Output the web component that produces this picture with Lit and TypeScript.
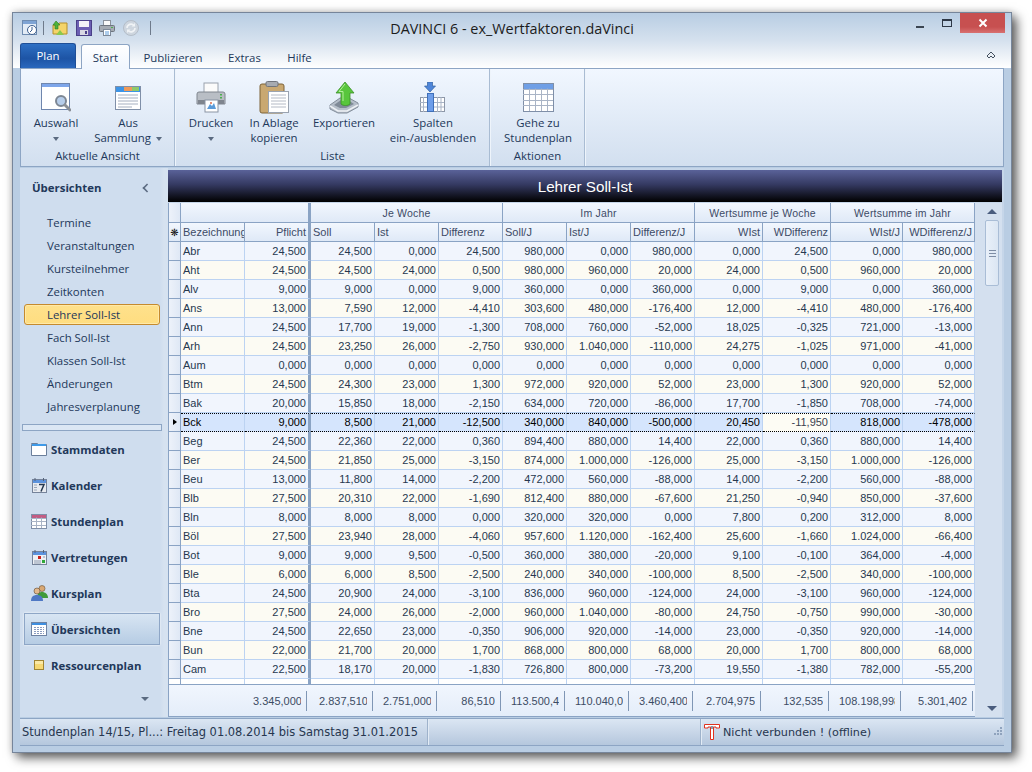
import { LitElement, html, css, svg } from 'lit';
import { customElement } from 'lit/decorators.js';
import { classMap } from 'lit/directives/class-map.js';

const ROWS = `Abr 24,500 24,500 0,000 24,500 980,000 0,000 980,000 0,000 24,500 0,000 980,000
Aht 24,500 24,500 24,000 0,500 980,000 960,000 20,000 24,000 0,500 960,000 20,000
Alv 9,000 9,000 0,000 9,000 360,000 0,000 360,000 0,000 9,000 0,000 360,000
Ans 13,000 7,590 12,000 -4,410 303,600 480,000 -176,400 12,000 -4,410 480,000 -176,400
Ann 24,500 17,700 19,000 -1,300 708,000 760,000 -52,000 18,025 -0,325 721,000 -13,000
Arh 24,500 23,250 26,000 -2,750 930,000 1.040,000 -110,000 24,275 -1,025 971,000 -41,000
Aum 0,000 0,000 0,000 0,000 0,000 0,000 0,000 0,000 0,000 0,000 0,000
Btm 24,500 24,300 23,000 1,300 972,000 920,000 52,000 23,000 1,300 920,000 52,000
Bak 20,000 15,850 18,000 -2,150 634,000 720,000 -86,000 17,700 -1,850 708,000 -74,000
Bck 9,000 8,500 21,000 -12,500 340,000 840,000 -500,000 20,450 -11,950 818,000 -478,000
Beg 24,500 22,360 22,000 0,360 894,400 880,000 14,400 22,000 0,360 880,000 14,400
Ber 24,500 21,850 25,000 -3,150 874,000 1.000,000 -126,000 25,000 -3,150 1.000,000 -126,000
Beu 13,000 11,800 14,000 -2,200 472,000 560,000 -88,000 14,000 -2,200 560,000 -88,000
Blb 27,500 20,310 22,000 -1,690 812,400 880,000 -67,600 21,250 -0,940 850,000 -37,600
Bln 8,000 8,000 8,000 0,000 320,000 320,000 0,000 7,800 0,200 312,000 8,000
Böl 27,500 23,940 28,000 -4,060 957,600 1.120,000 -162,400 25,600 -1,660 1.024,000 -66,400
Bot 9,000 9,000 9,500 -0,500 360,000 380,000 -20,000 9,100 -0,100 364,000 -4,000
Ble 6,000 6,000 8,500 -2,500 240,000 340,000 -100,000 8,500 -2,500 340,000 -100,000
Bta 24,500 20,900 24,000 -3,100 836,000 960,000 -124,000 24,000 -3,100 960,000 -124,000
Bro 27,500 24,000 26,000 -2,000 960,000 1.040,000 -80,000 24,750 -0,750 990,000 -30,000
Bne 24,500 22,650 23,000 -0,350 906,000 920,000 -14,000 23,000 -0,350 920,000 -14,000
Bun 22,000 21,700 20,000 1,700 868,000 800,000 68,000 20,000 1,700 800,000 68,000
Cam 22,500 18,170 20,000 -1,830 726,800 800,000 -73,200 19,550 -1,380 782,000 -55,200`
  .split('\n')
  .map((line) => line.split(' '));

const TOTALS = ['3.345,000', '2.837,510', '2.751,000', '86,510', '113.500,400', '110.040,000', '3.460,400', '2.704,975', '132,535', '108.198,998', '5.301,402'];

const COLUMNS: [string, boolean][] = [
  ['Bezeichnung', false], ['Pflicht', true], ['Soll', false], ['Ist', false], ['Differenz', false],
  ['Soll/J', false], ['Ist/J', false], ['Differenz/J', false],
  ['WIst', true], ['WDifferenz', true], ['WIst/J', true], ['WDifferenz/J', true],
];

const GROUPS: [string, number][] = [['Je Woche', 3], ['Im Jahr', 3], ['Wertsumme je Woche', 2], ['Wertsumme im Jahr', 2]];

const LINKS = ['Termine', 'Veranstaltungen', 'Kursteilnehmer', 'Zeitkonten', 'Lehrer Soll-Ist', 'Fach Soll-Ist', 'Klassen Soll-Ist', 'Änderungen', 'Jahresverplanung'];

const table = (x: number, y: number, w: number, h: number, cols: number, rows: number, head: string) => {
  const cw = w / cols;
  const rh = h / rows;
  return svg`<rect x=${x + 0.5} y=${y + 0.5} width=${w} height=${h} fill="#fff" stroke="#7f8fa8"/>
    <rect x=${x + 1} y=${y + 1} width=${w - 1} height=${rh} fill=${head}/>
    ${Array.from({ length: cols - 1 }, (_, i) => svg`<path d="M${x + 0.5 + Math.round(cw * (i + 1))} ${y + rh}V${y + h}" stroke="#a9b4c6"/>`)}
    ${Array.from({ length: rows - 1 }, (_, i) => svg`<path d="M${x} ${y + 0.5 + Math.round(rh * (i + 1))}H${x + w}" stroke="#a9b4c6"/>`)}`;
};

const ICONS: Record<string, unknown> = {
  auswahl: html`<svg width="30" height="30" viewBox="0 0 30 30">
    <rect x="0.5" y="0.5" width="28" height="26" fill="#fff" stroke="#6f86ad"/>
    <rect x="1" y="1" width="27" height="3" fill="#7ea6ea"/>
    <circle cx="20" cy="18" r="5" fill="#b6cdea" stroke="#7d8794" stroke-width="2"/>
    <path d="M24 22l5 5" stroke="#8a8f96" stroke-width="3" stroke-linecap="round"/>
  </svg>`,
  sammlung: html`<svg width="28" height="26" viewBox="0 0 28 26">
    <rect x="1.5" y="1.5" width="25" height="23" fill="#fff" stroke="#7f8fa8"/>
    <rect x="2" y="2" width="24" height="5" fill="#3d94e6"/>
    <rect x="10" y="2" width="8" height="4" fill="#ef9a5a"/><rect x="18" y="2" width="7" height="4" fill="#8fca6a"/>
    <path d="M4 10h20M4 13h20M4 16h20M4 19h20M4 22h14" stroke="#a5afc0"/>
  </svg>`,
  drucken: html`<svg width="30" height="32" viewBox="0 0 30 32">
    <rect x="8" y="1" width="14" height="11" fill="#fbfbfb" stroke="#9aa2ad"/>
    <path d="M3 10h24a2 2 0 0 1 2 2v10H1V12a2 2 0 0 1 2-2z" fill="#b9bec5" stroke="#80868f"/>
    <rect x="2" y="18" width="26" height="4" fill="#7f858e"/>
    <rect x="24" y="12" width="2" height="1.5" fill="#4caf50"/><rect x="24" y="15" width="2" height="1.5" fill="#4caf50"/>
    <rect x="9" y="18" width="13" height="12" fill="#fff" stroke="#8a94a3"/>
    <path d="M11 27l3-5 2 2 2-3 2 6z" fill="#5c9bd8"/><circle cx="15" cy="21" r="1" fill="#d86a4a"/>
  </svg>`,
  ablage: html`<svg width="30" height="33" viewBox="0 0 30 33">
    <rect x="1" y="3" width="24" height="29" rx="2" fill="#c9a871" stroke="#7c6238"/>
    <rect x="7" y="0.5" width="12" height="5" rx="1.5" fill="#a7abb1" stroke="#71757c"/>
    <rect x="9.5" y="10.5" width="20" height="21" fill="#fff" stroke="#9aa3b0"/>
    <path d="M12 14h15M12 17h15M12 20h15M12 23h15M12 26h15" stroke="#b4bac5"/>
  </svg>`,
  export: html`<svg width="30" height="33" viewBox="0 0 30 33">
    <path d="M1 24l10-7h9l9 5v4l-11 6H9l-8-4z" fill="#b5bec9" stroke="#838d9a"/>
    <path d="M5 24l7-5h7l6 4-8 4h-6z" fill="#7f8a97"/>
    <path d="M1 25l8 5h9l11-6" fill="none" stroke="#eef1f5" stroke-width="1.500"/>
    <path d="M16 1L25 12h-4v11c-2 2-7 2-9 0V12H7z" fill="#58c63c" stroke="#3c8f2a" stroke-width="0.800"/>
    <path d="M16 3l-6 7.500h4V20" fill="none" stroke="#b3ef9c"/>
  </svg>`,
  spalten: html`<svg width="26" height="32" viewBox="0 0 26 32">
    <path d="M7.500 0h5v4h3l-5.500 6-5.500-6h3z" fill="#4f86d9" stroke="#33619f" stroke-width="0.700"/>
    <rect x="0.500" y="15.500" width="24" height="14" fill="#fff" stroke="#8d97a8"/>
    <path d="M0 20.500h24M0 25h24M17.500 15v15M21 15v15M3.500 15v15" stroke="#a9b4c6"/>
    <rect x="7.500" y="11.500" width="6" height="18" fill="#6e9eea" stroke="#3f6fb8"/>
  </svg>`,
  plan: html`<svg width="31" height="29" viewBox="0 0 31 29">
    ${table(0, 0, 30, 28, 5, 5, '#6f9fe6')}
  </svg>`,
  qaClock: html`<svg width="16" height="17" viewBox="0 0 16 17">
    <rect x="0.5" y="1.5" width="14" height="14" fill="#e3ecf6" stroke="#6f8cb0"/>
    <rect x="1" y="2" width="13" height="3" fill="#7fa4d4"/>
    <circle cx="10" cy="11" r="4.5" fill="#fff" stroke="#3d5f8f"/>
    <path d="M10 8v3l-2 2" fill="none" stroke="#3d5f8f"/>
  </svg>`,
  qaFolder: html`<svg width="16" height="16" viewBox="0 0 16 16">
    <path d="M1 5h5l1-2h8v11H1z" fill="#f4d46a" stroke="#b48f2d"/>
    <path d="M4 1l4 4H6v4H3V5H1z" fill="#4fb13b" stroke="#2e7d23" stroke-width="0.6"/>
    <path d="M4 15l4-5 4 5z" fill="#8bc94f"/>
  </svg>`,
  qaSave: html`<svg width="16" height="16" viewBox="0 0 16 16">
    <rect x="0.5" y="0.5" width="15" height="15" fill="#6c5fb3" stroke="#4a4088"/>
    <rect x="3" y="1" width="10" height="6" fill="#f2f2f7"/>
    <rect x="4" y="10" width="8" height="5" fill="#d8d8e4"/>
    <rect x="9" y="11" width="2" height="3" fill="#4a4088"/>
  </svg>`,
  qaPrint: html`<svg width="16" height="16" viewBox="0 0 16 16">
    <rect x="4.500" y="0.500" width="7" height="6" fill="#fafafa" stroke="#8b929c"/>
    <rect x="0.500" y="5.500" width="15" height="6" rx="1" fill="#a5abb3" stroke="#6f7680"/>
    <rect x="4.500" y="9.500" width="7" height="6" fill="#fff" stroke="#7f8a99"/>
    <path d="M6 12h4M6 14h4" stroke="#5c9bd8"/>
    <rect x="12" y="7" width="2" height="1" fill="#4caf50"/>
  </svg>`,
  qaRefresh: html`<svg width="16" height="16" viewBox="0 0 16 16">
    <circle cx="8" cy="8" r="7.5" fill="#ced6df" stroke="#b4bdc8"/>
    <path d="M4 8a4 4 0 0 1 7-2.5M12 8a4 4 0 0 1-7 2.5" fill="none" stroke="#f0f3f6" stroke-width="1.6"/>
    <path d="M12 3v3.5H8.5zM4 13V9.500h3.500z" fill="#f0f3f6"/>
  </svg>`,
  stammdaten: html`<svg width="16" height="14" viewBox="0 0 16 14">
    <path d="M0.5 2.5V1.500h6l1 1H15.500v11H0.500z" fill="#fff" stroke="#6b7f9b"/>
    <rect x="1" y="2" width="14" height="2" fill="#3f9ae8"/>
  </svg>`,
  kalender: html`<svg width="15" height="15" viewBox="0 0 15 15">
    <rect x="0.500" y="1.500" width="14" height="13" fill="#e8ebf0" stroke="#76839a"/>
    <rect x="1" y="2" width="13" height="3" fill="#5d93dd"/>
    <path d="M3 0v3M11.500 0v3" stroke="#54637a"/>
    <path d="M2 7h3M2 9.500h3M2 12h3" stroke="#9aa6b8"/>
    <path d="M7 6.500h5l-3 7" fill="none" stroke="#24374f" stroke-width="1.500"/>
  </svg>`,
  stundenplan: html`<svg width="16" height="15" viewBox="0 0 16 15">${table(0, 0, 15, 14, 3, 4, '#c25c83')}</svg>`,
  vertretungen: html`<svg width="15" height="15" viewBox="0 0 15 15">
    <rect x="0.500" y="1.500" width="14" height="13" fill="#eef0f4" stroke="#76839a"/>
    <rect x="1" y="2" width="13" height="3" fill="#5d93dd"/>
    <path d="M3 0v3M11.500 0v3" stroke="#54637a"/>
    <rect x="6" y="6" width="3" height="3" fill="#c8201c"/><rect x="10" y="10" width="3" height="3" fill="#2fa83a"/>
    <path d="M2 11h7M2 13h7M11 7h2" stroke="#8e9bb0"/>
  </svg>`,
  kursplan: html`<svg width="17" height="16" viewBox="0 0 17 16">
    <circle cx="11" cy="3.500" r="3" fill="#d9a874" stroke="#6a5236" stroke-width="0.600"/>
    <path d="M6 13c0-4 2-6 5-6s6 2 6 6z" fill="#3f9a3a"/>
    <circle cx="6" cy="6" r="3" fill="#e4b88a" stroke="#5c4630" stroke-width="0.600"/>
    <path d="M0 16c0-4 2-6 6-6s6 2 6 6z" fill="#4f78c4"/>
  </svg>`,
  uebersichten: html`<svg width="16" height="14" viewBox="0 0 16 14">
    <rect x="0.500" y="0.500" width="15" height="13" fill="#fff" stroke="#6f83a3"/>
    <rect x="1" y="1" width="14" height="2" fill="#3f8fe0"/>
    <path d="M3 5.500h10M3 7.500h10M3 9.500h10M3 11.500h10" stroke="#8a9cc0" stroke-dasharray="2 1"/>
  </svg>`,
  ressourcen: html`<svg width="14" height="14" viewBox="0 0 14 14">
    <rect x="2.500" y="2.500" width="9" height="9" fill="#f6d873" stroke="#a08432"/>
    <rect x="3" y="3" width="8" height="3" fill="#fbe9a5"/>
  </svg>`,
  logo: html`<svg width="16" height="16" viewBox="0 0 16 16">
    <path d="M0.500 0.500H15.500V4H12V3H9.500V15.500H6.500V3H4V4H0.500z" fill="#fff" stroke="#e0301e"/>
    <path d="M6.500 2H9.500L8.800 5H7.200z" fill="#8d97a5"/>
  </svg>`,
};

@customElement('app-root')
export class AppRoot extends LitElement {
  static styles = css`
    :host {
      display: block;
      width: 1032px;
      height: 772px;
      overflow: hidden;
      background: #fff;
      color: #22385a;
      font-family: 'Open Sans', 'Liberation Sans', sans-serif;
      font-size: 11.4px;
    }
    svg { display: block; flex: none; }
    .window {
      box-sizing: border-box;
      width: 1000px;
      height: 741px;
      margin: 12px 0 0 12px;
      display: flex;
      flex-direction: column;
      border: 1px solid #76859a;
      background: #b9cde3;
      box-shadow: 5px 5px 10px rgba(0, 0, 0, 0.6), 0 0 8px rgba(0, 0, 0, 0.2);
    }

    /* title bar and tabs */
    .head { height: 55px; flex: none; background: linear-gradient(#b8cde3, #d5e1ee 50%, #fff); }
    .title-row { height: 29px; display: grid; grid-template-columns: 1fr auto 1fr; }
    .qa { display: flex; align-items: center; padding-left: 9px; }
    .qa .sep { width: 1px; height: 14px; background: #6e7a8b; }
    .m5 { margin-left: 5px; }
    .m7 { margin-left: 7px; }
    .m8 { margin-left: 8px; }
    .m11 { margin-left: 11px; }
    .title { font-size: 14.4px; color: #1c1c1c; padding-top: 6px; line-height: 19px; }
    .controls { display: flex; justify-content: flex-end; padding-right: 6px; }
    .ctl { height: 20px; display: flex; align-items: center; justify-content: center; }
    .ctl.min { width: 28px; padding-top: 4px; box-sizing: border-box; }
    .ctl.max { width: 26px; }
    .min i { display: block; width: 8px; height: 2px; background: #3b4552; margin-top: 3px; }
    .max i { display: block; box-sizing: border-box; width: 10px; height: 8px; border: 1px solid #2e3846; border-top-width: 2px; }
    .close {
      width: 45px;
      color: #fff;
      background: linear-gradient(#c75050, #c75050 70%, #d87070);
    }
    .tab-row { height: 26px; display: flex; align-items: flex-end; padding: 0 7px; }
    .tab { height: 25px; display: flex; align-items: center; justify-content: center; box-sizing: border-box; padding-top: 3px; flex: none; }
    .tab.plan {
      width: 56px;
      margin-right: 5px;
      color: #fff;
      padding: 0 0 2px;
      border: 1px solid #1f4f97;
      border-bottom: 0;
      border-radius: 3px 3px 0 0;
      background: linear-gradient(#2e70c4, #1d54a5 60%, #2a68bd);
    }
    .tab.start {
      width: 49px;
      height: 25px;
      margin-bottom: -1px;
      padding-top: 1px;
      position: relative;
      background: linear-gradient(#fff, #f0f6fe);
      border: 1px solid #8da5c4;
      border-bottom: 0;
      border-radius: 3px 3px 0 0;
    }
    .tab.t1 { width: 86px; }
    .tab.t2 { width: 57px; }
    .tab.t3 { width: 53px; }
    .collapse { margin-left: auto; padding: 0 8px 9px 0; }

    /* ribbon */
    .ribbon {
      height: 99px;
      margin: 0 7px;
      flex: none;
      display: flex;
      box-sizing: border-box;
      border: 1px solid #8da5c4;
      background: linear-gradient(#f1f7ff, #d2dfef);
    }
    .group { display: flex; flex-direction: column; border-right: 1px solid #a9bcd3; box-shadow: 1px 0 0 #eef4fb; margin-right: 1px; }
    .group.g1 { width: 153px; }
    .group.g2 { width: 313px; }
    .group.g3 { width: 93px; }
    .btns { height: 79px; display: flex; }
    .btn { flex: none; display: flex; flex-direction: column; align-items: center; line-height: 15px; text-align: center; }
    .btn .ic { height: 35px; padding-top: 11px; box-sizing: content-box; display: flex; align-items: center; }
    .w70 { width: 70px; }
    .w74 { width: 74px; }
    .w56 { width: 56px; }
    .w84 { width: 84px; }
    .w94 { width: 94px; }
    .arrow { display: inline-block; width: 0; height: 0; border: 3px solid transparent; border-top: 4px solid #5a6a80; border-bottom: 0; vertical-align: middle; margin-left: 2px; }
    .arrow.solo { margin: 0; }
    .group-label { text-align: center; line-height: 16px; }

    /* main area */
    .main { height: 549px; flex: none; margin: 1px 7px 0; display: flex; background: #c6d6e9; }
    .side { width: 148px; flex: none; display: flex; flex-direction: column; background: linear-gradient(90deg, #cfddee 140px, #d6e2f0 144px); }
    .side-head { height: 39px; display: flex; align-items: center; justify-content: space-between; padding: 0 17px 0 12px; font-weight: 700; box-sizing: border-box; }
    .chev { width: 6px; height: 6px; border-left: 2px solid #5d6c82; border-bottom: 2px solid #5d6c82; transform: rotate(45deg) scale(0.8); }
    .links { display: flex; flex-direction: column; padding: 4px 0 0 4px; }
    .link { width: 136px; height: 23px; box-sizing: border-box; padding: 0 0 0 23px; display: flex; align-items: center; }
    .link.on {
      height: 21px;
      margin: 1px 0;
      border: 1px solid #c58a2e;
      border-radius: 3px;
      padding-left: 22px;
      background: linear-gradient(#fee18c, #ffdd80);
      box-shadow: inset 0 0 0 1px #ffe9a8;
    }
    .split { height: 7px; margin: 6px 6px 0 2px; box-sizing: border-box; border: 1px solid #8da5c4; background: #dce7f4; flex: none; }
    .navs { display: flex; flex-direction: column; padding: 0 0 0 4px; }
    .nav { width: 136px; height: 36px; box-sizing: border-box; padding-left: 7px; display: flex; align-items: center; gap: 4px; font-weight: 700; }
    .nav .ni { width: 16px; display: flex; justify-content: center; }
    .nav.on {
      height: 32px;
      margin: 2px 0;
      padding-left: 6px;
      border: 1px solid #8ea6c6;
      background: linear-gradient(#d8e5f3, #b6cce4);
      box-shadow: 0 0 2px #fff;
    }
    .more { margin-top: 7px; padding-left: 121px; }
    .more .arrow { border-width: 4px; border-top-width: 4px; border-bottom: 0; margin: 0; }

    /* table */
    .content { width: 834px; flex: none; display: flex; flex-direction: column; }
    .banner {
      height: 32px;
      margin-top: 2px;
      padding-top: 1px;
      box-sizing: border-box;
      flex: none;
      display: flex;
      align-items: center;
      justify-content: center;
      color: #fff;
      font: 15.2px 'Liberation Sans', sans-serif;
      background: linear-gradient(#5a6299, #353a62 45%, #000);
    }
    .body { flex: 1; min-height: 0; display: flex; margin-top: 1px; }
    .grid {
      width: 807px;
      flex: none;
      display: flex;
      flex-direction: column;
      border-left: 1px solid #8aa3c4;
      box-sizing: border-box;
      background: #fff;
      font: 11px 'Liberation Sans', sans-serif;
      color: #26384f;
    }
    .r {
      display: grid;
      grid-template-columns: 12px 64px 66px 64px 64px 64px 64px 64px 64px 68px 68px 72px 72px;
      flex: none;
    }
    .r > div {
      box-sizing: border-box;
      min-width: 0;
      overflow: hidden;
      white-space: nowrap;
      padding: 0 2px;
      line-height: 18px;
    }
    .hc {
      height: 19px;
      background: linear-gradient(#f2f7fe, #dfe9f7);
      border-right: 1px solid #8aa3c4;
      border-bottom: 1px solid #8aa3c4;
      color: #3d4b66;
    }
    .r.first > div { height: 20px; line-height: 20px; }
    .hc.group-h { text-align: center; font-size: 10.5px; letter-spacing: 0.2px; }
    .r > .hc.star { padding: 0; text-align: center; font: 10px/19px 'DejaVu Sans', sans-serif; color: #111; }
    .r > .thick { border-right: 3px solid #8aa3c4; }
    .r > .ind {
      height: 19px;
      padding: 0;
      background: linear-gradient(90deg, #edf2fa, #dfe8f5);
      border-right: 1px solid #8aa3c4;
      border-bottom: 1px solid #8aa3c4;
      display: flex;
      align-items: center;
      justify-content: center;
    }
    .tri { width: 0; height: 0; border: 3px solid transparent; border-left: 4px solid #000; border-right: 0; }
    .c { height: 19px; border-right: 1px solid #bcd3f2; border-bottom: 1px solid #bcd3f2; }
    .num { text-align: right; }
    .odd .c { background: #f1f5fd; }
    .even .c { background: #fcfbf3; }
    .sel .c {
      background: #d5e5fd;
      color: #000;
      border-bottom: 1px dotted #000;
      border-top: 1px dotted #000;
    }
    .r.sel > .c { line-height: 16px; }
    .sel .c.lite { background: #fdfcf4; color: #3a4250; }
    .rest { flex: 1; min-height: 0; }
    .rest .c, .r.rest > .ind { height: 100%; background: #fff; border-bottom: 0; }
    .r.totals {
      height: 33px;
      flex: none;
      border-top: 1px solid #8aa3c4;
      border-bottom: 1px solid #8aa3c4;
      background: linear-gradient(#f1f6fe, #e4edf9);
      box-sizing: border-box;
      align-items: center;
      color: #3c4c64;
    }
    .r.totals > .t {
      height: 20px;
      margin-right: 2px;
      padding: 0 5px 0 8px;
      border-right: 1px solid #7f96b5;
      line-height: 20px;
    }
    .r.totals > .t.wide { margin-right: 4px; }
    .t span { display: block; overflow: hidden; white-space: nowrap; text-align: right; }

    /* scrollbar */
    .scroll {
      width: 27px;
      flex: none;
      display: flex;
      flex-direction: column;
      align-items: center;
      background: #d4e0ef;
      box-sizing: border-box;
      padding: 6px 0 6px 7px;
    }
    .up, .down { width: 0; height: 0; border: 5px solid transparent; flex: none; }
    .up { border-bottom: 5px solid #4a5d7e; border-top: 0; }
    .down { border-top: 5px solid #4a5d7e; border-bottom: 0; margin-top: auto; }
    .thumb {
      width: 14px;
      height: 66px;
      margin-top: 6px;
      box-sizing: border-box;
      border: 1px solid #a9bdd6;
      border-radius: 2px;
      background: linear-gradient(90deg, #e9f0f9, #dbe6f3);
      display: flex;
      align-items: center;
      justify-content: center;
    }
    .grip { width: 7px; height: 7px; border-top: 1px solid #7d8da5; border-bottom: 1px solid #7d8da5; box-sizing: border-box; background: linear-gradient(#0000 2px, #7d8da5 2px, #7d8da5 3px, #0000 3px); }

    /* status */
    .status {
      height: 28px;
      margin: 1px 7px 0;
      flex: none;
      display: flex;
      align-items: center;
      box-sizing: border-box;
      border-top: 1px solid #8da5c4;
      border-bottom: 1px solid #8da5c4;
      background: linear-gradient(#dbe6f3, #b5c7dd);
      font: 11px 'DejaVu Sans', sans-serif;
      color: #26364f;
    }
    .pane { height: 100%; display: flex; align-items: center; box-sizing: border-box; border-right: 1px solid #9eb2cb; box-shadow: 1px 0 0 #e2ebf5; flex: none; }
    .p1 { width: 408px; padding-left: 2px; font-size: 11.45px; }
    .p2 { width: 273px; }
    .p3 { flex: 1; padding-left: 3px; gap: 3px; border-right: 0; box-shadow: none; min-width: 0; font-size: 11.2px; }
    .res { margin-right: 1px; flex: none; }
  `;

  private renderBtn(icon: string, lines: unknown[], width: string, arrow = false) {
    return html`<div class="btn ${width}">
      <div class="ic">${ICONS[icon]}</div>
      <div class="lb">${lines.map((l) => html`<div>${l}</div>`)}${arrow ? html`<div><span class="arrow solo"></span></div>` : ''}</div>
    </div>`;
  }

  private renderRow(row: string[], index: number) {
    const sel = row[0] === 'Bck';
    const classes = { r: true, sel, odd: index % 2 === 0, even: index % 2 === 1 };
    return html`<div class=${classMap(classes)}>
      <div class="ind">${sel ? html`<span class="tri"></span>` : ''}</div>
      ${row.map((val, i) => html`<div class="c ${i > 0 ? 'num' : ''} ${i === 1 ? 'thick' : ''} ${sel && i === 9 ? 'lite' : ''}">${val}</div>`)}
    </div>`;
  }

  render() {
    return html`<div class="window">
      <div class="head">
        <div class="title-row">
          <div class="qa">
            ${ICONS.qaClock}<span class="sep m5"></span>
            <span class="m8">${ICONS.qaFolder}</span>
            <span class="m8">${ICONS.qaSave}</span>
            <span class="m7">${ICONS.qaPrint}</span>
            <span class="m8">${ICONS.qaRefresh}</span>
            <span class="sep m11"></span>
          </div>
          <div class="title">DAVINCI 6 - ex_Wertfaktoren.daVinci</div>
          <div class="controls">
            <div class="ctl min"><i></i></div>
            <div class="ctl max"><i></i></div>
            <div class="ctl close">
              <svg width="10" height="10" viewBox="0 0 10 10"><path d="M1.500 1.500l7 7M8.500 1.500l-7 7" stroke="#fff" stroke-width="2"/></svg>
            </div>
          </div>
        </div>
        <div class="tab-row">
          <div class="tab plan">Plan</div>
          <div class="tab start">Start</div>
          <div class="tab t1">Publizieren</div>
          <div class="tab t2">Extras</div>
          <div class="tab t3">Hilfe</div>
          <div class="collapse">
            <svg width="10" height="8" viewBox="0 0 10 8"><path d="M1 5l4-4 4 4-2 2-2-2-2 2z" fill="none" stroke="#44505f"/></svg>
          </div>
        </div>
      </div>

      <div class="ribbon">
        <div class="group g1">
          <div class="btns">
            ${this.renderBtn('auswahl', ['Auswahl'], 'w70', true)}
            ${this.renderBtn('sammlung', ['Aus', html`Sammlung <span class="arrow"></span>`], 'w74')}
          </div>
          <div class="group-label">Aktuelle Ansicht</div>
        </div>
        <div class="group g2">
          <div class="btns">
            ${this.renderBtn('drucken', ['Drucken'], 'w70', true)}
            ${this.renderBtn('ablage', ['In Ablage', 'kopieren'], 'w56')}
            ${this.renderBtn('export', ['Exportieren'], 'w84')}
            ${this.renderBtn('spalten', ['Spalten', 'ein-/ausblenden'], 'w94')}
          </div>
          <div class="group-label">Liste</div>
        </div>
        <div class="group g3">
          <div class="btns">${this.renderBtn('plan', ['Gehe zu', 'Stundenplan'], 'w94')}</div>
          <div class="group-label">Aktionen</div>
        </div>
      </div>

      <div class="main">
        <div class="side">
          <div class="side-head"><span>Übersichten</span><span class="chev"></span></div>
          <div class="links">
            ${LINKS.map((l) => html`<div class=${classMap({ link: true, on: l === 'Lehrer Soll-Ist' })}>${l}</div>`)}
          </div>
          <div class="split"></div>
          <div class="navs">
            ${[
              ['stammdaten', 'Stammdaten'], ['kalender', 'Kalender'], ['stundenplan', 'Stundenplan'],
              ['vertretungen', 'Vertretungen'], ['kursplan', 'Kursplan'], ['uebersichten', 'Übersichten'], ['ressourcen', 'Ressourcenplan'],
            ].map(([ic, label]) => html`<div class=${classMap({ nav: true, on: label === 'Übersichten' })}>
              <span class="ni">${ICONS[ic]}</span>${label}
            </div>`)}
          </div>
          <div class="more"><span class="arrow"></span></div>
        </div>

        <div class="content">
          <div class="banner">Lehrer Soll-Ist</div>
          <div class="body">
            <div class="grid">
              <div class="r first">
                <div class="ind"></div>
                <div class="hc thick" style="grid-column: span 2"></div>
                ${GROUPS.map(([name, span]) => html`<div class="hc group-h" style="grid-column: span ${span}">${name}</div>`)}
              </div>
              <div class="r">
                <div class="hc star">❋</div>
                ${COLUMNS.map(([name, right], i) => html`<div class="hc ${right ? 'num' : ''} ${i === 1 ? 'thick' : ''}">${name}</div>`)}
              </div>
              ${ROWS.map((row, i) => this.renderRow(row, i))}
              <div class="r rest">
                <div class="ind"></div>
                ${COLUMNS.map((_, i) => html`<div class="c ${i === 1 ? 'thick' : ''}"></div>`)}
              </div>
              <div class="r totals">
                <div></div><div></div>
                ${TOTALS.map((t, i) => html`<div class="t ${i === 0 ? 'wide' : ''}"><span>${t}</span></div>`)}
              </div>
            </div>
            <div class="scroll">
              <span class="up"></span>
              <div class="thumb"><span class="grip"></span></div>
              <span class="down"></span>
            </div>
          </div>
        </div>
      </div>

      <div class="status">
        <div class="pane p1">Stundenplan 14/15, Pl...: Freitag 01.08.2014 bis Samstag 31.01.2015</div>
        <div class="pane p2"></div>
        <div class="pane p3">${ICONS.logo}<span>Nicht verbunden ! (offline)</span></div>
        <svg class="res" width="12" height="12" viewBox="0 0 12 12" fill="#8fa3bd">
          <rect x="9" y="1" width="2" height="2"/><rect x="6" y="4" width="2" height="2"/><rect x="9" y="4" width="2" height="2"/>
          <rect x="3" y="7" width="2" height="2"/><rect x="6" y="7" width="2" height="2"/><rect x="9" y="7" width="2" height="2"/>
        </svg>
      </div>
    </div>`;
  }
}
